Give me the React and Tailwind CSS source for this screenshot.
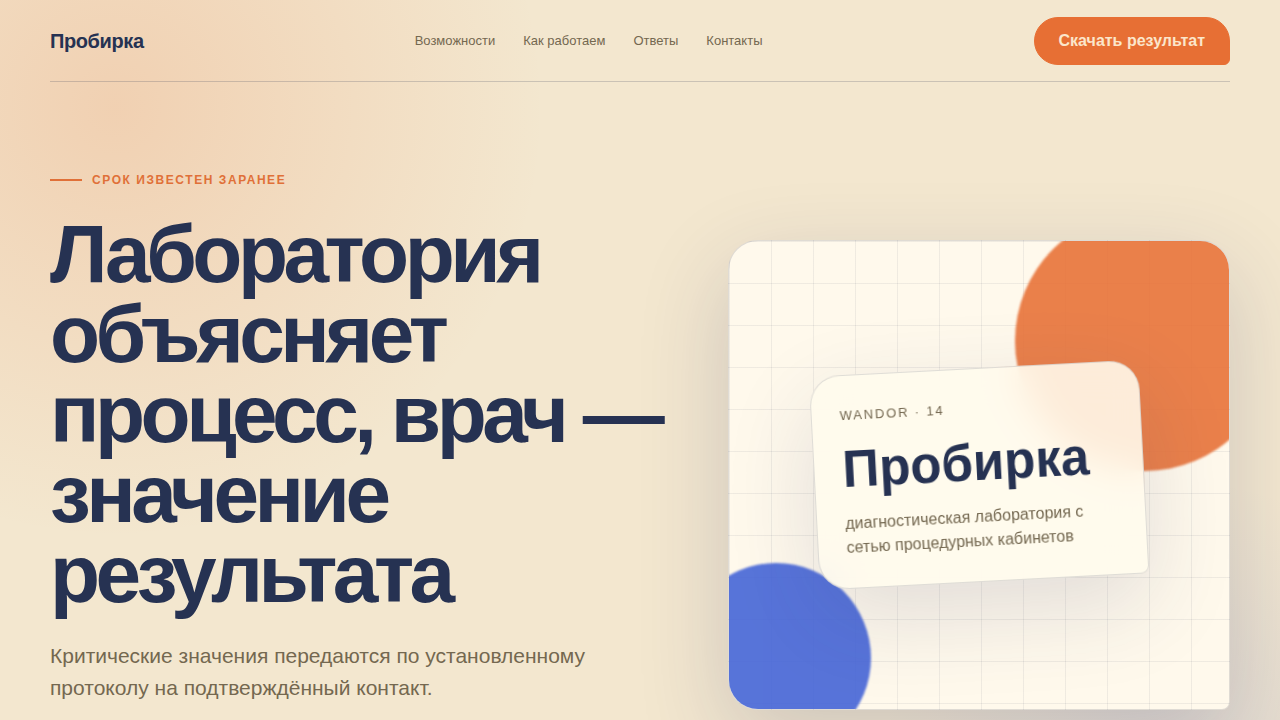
import React from "react";

const links = [
  { label: "Возможности", href: "#features" },
  { label: "Как работаем", href: "#process" },
  { label: "Ответы", href: "#answers" },
  { label: "Контакты", href: "#contacts" },
];

// =========================
// HEADER
// =========================
function Header() {
  return (
    <header className="flex min-h-[82px] items-center justify-between border-b border-[#26325233]">
      <a href="#top" className="text-xl font-bold tracking-[-0.02em]">
        Пробирка
      </a>

      <nav className="flex gap-7 text-[13px] text-[#746850]">
        {links.map((link) => (
          <a key={link.href} href={link.href} className="hover:text-[#263252]">
            {link.label}
          </a>
        ))}
      </nav>

      <button
        type="button"
        className="h-12 cursor-pointer rounded-3xl rounded-br-md border border-[#e76f34] bg-[#e76f34] px-6 font-bold text-[#fbe6cb]"
      >
        Скачать результат
      </button>
    </header>
  );
}

// =========================
// CARD WITH CIRCLES
// =========================
function Poster() {
  return (
    <div className="relative flex h-[470px] items-center justify-center overflow-hidden rounded-[30px] rounded-br-lg border border-[#26325226] bg-[#fff9ec] bg-[linear-gradient(#26325212_1px,transparent_1px),linear-gradient(90deg,#26325212_1px,transparent_1px)] bg-size-[42px_42px] shadow-[0_30px_90px_#28326430]">
      <div className="absolute -top-[30px] -right-[46px] size-[260px] rounded-full bg-[#e76f34] opacity-88 blur-[1px]" />
      <div className="absolute -bottom-11 -left-12 size-[190px] rounded-full bg-[#4565d8] opacity-90 blur-[1px]" />

      <div className="relative w-[66%] -rotate-3 rounded-[30px] rounded-br-lg border border-[#26325226] bg-[#fffaed]/88 p-7 shadow-[0_30px_90px_#28326424] backdrop-blur-[18px]">
        <p className="text-[13px] leading-6 tracking-[0.14em] text-[#746850]">WANDOR · 14</p>
        <p className="mt-4 text-[51px] leading-[52px] font-bold">Пробирка</p>
        <p className="mt-4 leading-6 text-[#746850]">
          диагностическая лаборатория с сетью процедурных кабинетов
        </p>
      </div>
    </div>
  );
}

function App() {
  return (
    <div
      id="top"
      className="min-h-screen overflow-hidden bg-[#f3e7cf] bg-[radial-gradient(circle_at_115px_108px,#e76f3430,transparent_430px),radial-gradient(circle_at_92%_108%,#4565d81f,transparent_300px)] px-[50px] font-['Liberation_Sans',Arial,sans-serif] text-[#263252]"
    >
      <Header />

      {/* HERO */}
      <main className="grid grid-cols-[minmax(0,1.22fr)_minmax(0,1fr)] items-end gap-[66px] pt-[90px] pb-2.5">
        <section className="pb-1.5">
          <p className="flex items-center gap-2.5 text-xs font-bold tracking-[0.13em] text-[#e07038] uppercase">
            <span className="h-0.5 w-8 bg-[#e07038]" />
            Срок известен заранее
          </p>
          <h1 className="mt-[26px] text-[82px] leading-[80px] font-bold tracking-[-0.055em]">
            Лаборатория объясняет процесс, врач — значение результата
          </h1>
          <p className="mt-[26px] max-w-[580px] text-[21px] leading-8 text-[#746850]">
            Критические значения передаются по установленному протоколу на подтверждённый контакт.
          </p>
        </section>

        <Poster />
      </main>
    </div>
  );
}

export default App;
